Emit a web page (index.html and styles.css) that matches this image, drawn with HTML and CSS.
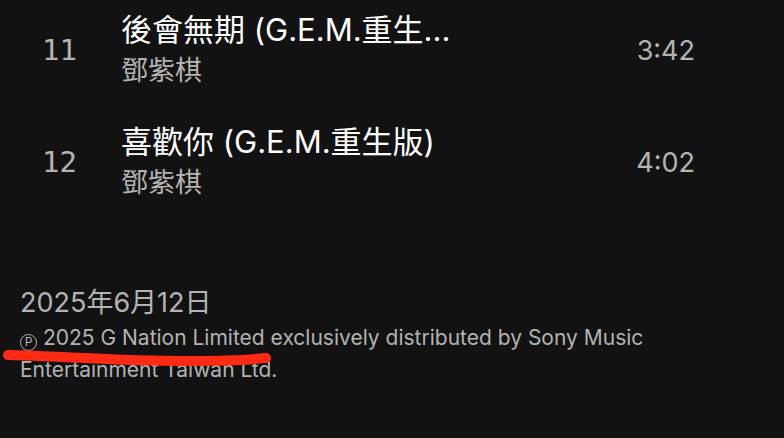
FILE: index.html
```html
<!DOCTYPE html>
<html lang="zh-Hant">
<head>
    <meta charset="UTF-8">
    <meta name="viewport" content="width=device-width, initial-scale=1.0">
    <title>鄧紫棋</title>
    <link rel="stylesheet" href="styles.css">
</head>
<body>

<div class="tracks">
    <div class="track">
        <div class="num">11</div>
        <div class="info">
            <div class="title">後會無期 (G.E.M.重生...</div>
            <div class="artist">鄧紫棋</div>
        </div>
        <div class="time">3:42</div>
    </div>
    <div class="track">
        <div class="num">12</div>
        <div class="info">
            <div class="title">喜歡你 (G.E.M.重生版)</div>
            <div class="artist">鄧紫棋</div>
        </div>
        <div class="time">4:02</div>
    </div>
</div>

<div class="release">
    <div class="date">2025年6月12日</div>
    <div class="copy"><span class="p" title="℗">P</span> 2025 G Nation Limited exclusively distributed by Sony Music Entertainment Taiwan Ltd.</div>
    <svg class="mark" width="280" height="30" viewBox="0 0 280 30">
        <path d="M8 9 C 60 10, 130 16, 200 15 S 255 12, 266 12" stroke="#ff2a14" stroke-width="10" fill="none" stroke-linecap="round"/>
    </svg>
</div>

</body>
</html>
```

FILE: styles.css
```css
body {
    margin: 0;
    background-color: #121212;
    color: white;
    font-family: "Inter", "Noto Sans CJK TC", sans-serif;
    height: 438px;
    overflow: hidden;
}

.tracks {
    margin-top: -6px;
}

.track {
    display: flex;
    align-items: center;
    height: 112px;
    padding-left: 42px;
    padding-right: 89px;
}

.num {
    width: 79px;
    font-family: "DejaVu Sans Mono", monospace;
    font-size: 29px;
    color: #b3b3b3;
}

.info {
    flex: 1;
    min-width: 0;
}

.title {
    font-size: 31px;
    line-height: 42px;
    white-space: nowrap;
}

.artist {
    font-size: 27px;
    line-height: 40px;
    color: #b3b3b3;
}

.time {
    font-size: 27px;
    color: #b3b3b3;
}

.release {
    position: relative;
    margin-top: 66px;
    padding-left: 20px;
    padding-right: 120px;
    color: #b3b3b3;
}

.date {
    font-size: 27px;
    line-height: 38px;
}

.copy {
    font-size: 21px;
    line-height: 32px;
}

.copy .p {
    display: inline-block;
    box-sizing: border-box;
    width: 17px;
    height: 17px;
    border: 1.5px solid #b3b3b3;
    border-radius: 50%;
    font-size: 12px;
    line-height: 14px;
    text-align: center;
    vertical-align: -1px;
}

.mark {
    position: absolute;
    left: 0;
    top: 62px;
}
```
